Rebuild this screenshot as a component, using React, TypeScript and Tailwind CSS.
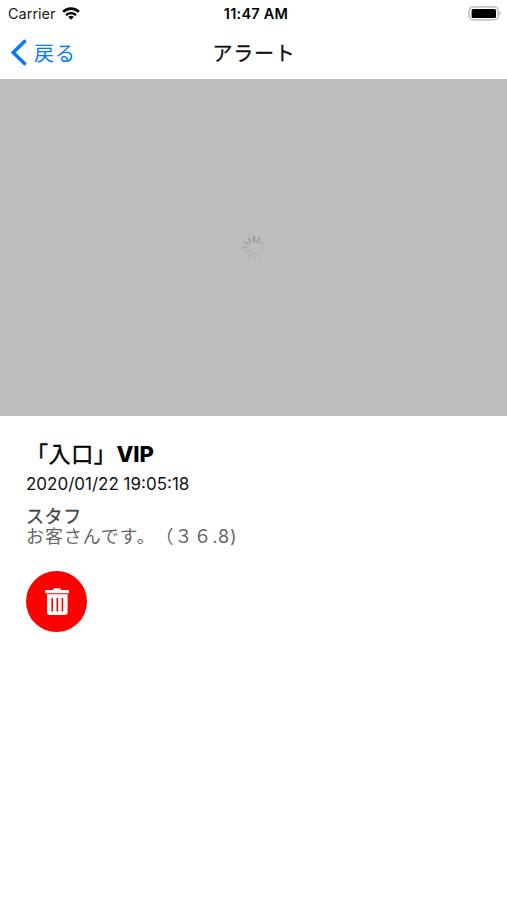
const SPOKES = [
  { angle: 0, color: "#989898" },
  { angle: 30, color: "#a0a0a0" },
  { angle: 60, color: "#b3b3b3" },
  { angle: 90, color: "#b8b8b8" },
  { angle: 120, color: "#b8b8b8" },
  { angle: 150, color: "#b6b6b6" },
  { angle: 180, color: "#b2b2b2" },
  { angle: 210, color: "#b2b2b2" },
  { angle: 240, color: "#b0b0b0" },
  { angle: 270, color: "#acacac" },
  { angle: 300, color: "#a8a8a8" },
  { angle: 330, color: "#a0a0a0" },
];

function WifiIcon() {
  return (
    <svg width="18" height="14" viewBox="0 0 18 14" fill="none" stroke="#000" strokeWidth="2.7">
      <path d="M1.2 4.9C5.4 0.6 12.6 0.6 16.8 4.9" />
      <path d="M4 8.1C6.8 5.4 11.2 5.4 14 8.1" strokeWidth="2.3" />
      <path d="M6.2 10C7.9 8.4 10.1 8.4 11.8 10L9 12.7Z" fill="#000" stroke="none" />
    </svg>
  );
}

function BatteryIcon() {
  return (
    <svg width="34" height="16" viewBox="0 0 34 16" fill="none">
      <rect x="1.2" y="0.9" width="29" height="13" rx="4" stroke="#c4c4c4" strokeWidth="1.7" />
      <rect x="3.6" y="3" width="24.4" height="9" rx="1.5" fill="#000" />
      <path d="M31.5 5.2C33.2 5.9 33.2 8.9 31.5 9.6Z" fill="#a8a8a8" />
    </svg>
  );
}

function Spinner() {
  return (
    <svg width="26" height="26" viewBox="-13 -12.5 26 26">
      {SPOKES.map(({ angle, color }) => (
        <line
          key={angle}
          y1="-6.4"
          y2="-10.7"
          stroke={color}
          strokeWidth="2.2"
          strokeLinecap="round"
          transform={`rotate(${angle})`}
        />
      ))}
    </svg>
  );
}

function TrashIcon() {
  return (
    <svg width="26" height="30" viewBox="0 0 26 30" fill="none">
      <path d="M1.2 2.9H8.8L10.2 1.3H16L17.4 2.9H25V6.3H1.2Z" fill="#fff" />
      <path d="M3 7.2H23.6V25.3Q23.6 28 20.9 28H5.7Q3 28 3 25.3Z" fill="#fff" />
      <path d="M8.2 11V24.5M13.3 11V24.5M18.4 11V24.5" stroke="#f00" strokeWidth="1.6" />
    </svg>
  );
}

export default function App() {
  return (
    <div className="flex h-[900px] w-[507px] flex-col overflow-hidden bg-white font-['Inter','Noto_Sans_CJK_JP',sans-serif] text-black [text-spacing-trim:space-all]">
      {/* status bar */}
      <div className="grid h-7 grid-cols-3 items-center pr-[5px] pl-2">
        <div className="flex items-center gap-[6px]">
          <span className="text-[14.5px] leading-7 text-[#222]">Carrier</span>
          <WifiIcon />
        </div>
        <span className="pl-[2px] text-center text-[14.5px] leading-7 font-semibold tracking-[0.25px] whitespace-nowrap">
          11:47 AM
        </span>
        <div className="flex justify-end">
          <BatteryIcon />
        </div>
      </div>

      {/* navigation bar */}
      <div className="grid h-[51px] grid-cols-3 items-center px-[10px] pb-[2px]">
        <button className="flex items-center gap-[7px] text-[#087bf5]">
          <svg width="17" height="27" viewBox="0 0 17 27" fill="none">
            <path d="M14.5 2.5L3.2 13.5L14.5 24.5" stroke="currentColor" strokeWidth="3.6" strokeLinecap="round" />
          </svg>
          <span className="pt-[2px] text-[20px] leading-7 tracking-[1px]">戻る</span>
        </button>
        <h1 className="pt-[2px] pl-[1px] text-center text-[20px] leading-7 tracking-[0.8px] whitespace-nowrap text-[#111] [-webkit-text-stroke:0.3px_#111]">
          アラート
        </h1>
      </div>

      {/* image still loading */}
      <div className="flex h-[337px] items-center justify-center bg-[#bdbdbd]">
        <Spinner />
      </div>

      <div className="flex flex-col items-start px-[26px] pt-[23px]">
        <h2 className="text-[22px] leading-[30px] tracking-[0.6px] [-webkit-text-stroke:0.4px_#000]">
          「入口」
          <span className="font-extrabold tracking-normal [-webkit-text-stroke:0]">VIP</span>
        </h2>
        <time className="mt-[3px] text-[17px] leading-6 text-[#111]">2020/01/22 19:05:18</time>
        <p className="mt-[11px] text-[18px] leading-5 tracking-[0.6px] text-[#444] [-webkit-text-stroke:0.3px_#444]">
          スタフ
        </p>
        <p className="text-[18px] leading-5 tracking-[0.9px] text-[#666]">お客さんです。（３６.8)</p>
        <button className="mt-6 flex size-[61px] items-center justify-center rounded-full bg-[#f00]">
          <TrashIcon />
        </button>
      </div>
    </div>
  );
}
